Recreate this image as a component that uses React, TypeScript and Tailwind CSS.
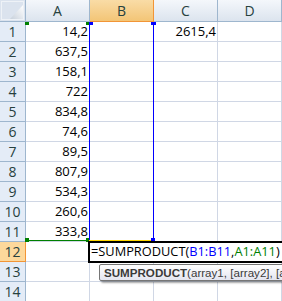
import React from "react";

const colA = ["14,2", "637,5", "158,1", "722", "834,8", "74,6", "89,5", "807,9", "534,3", "260,6", "333,8"];
const cols = ["A", "B", "C", "D"];

export default function App() {
  const rows = Array.from({ length: 14 }, (_, i) => i + 1);
  return (
    <div
      className="relative w-[282px] h-[301px] overflow-hidden bg-white text-black"
      style={{ fontFamily: '"Open Sans", "Noto Sans", sans-serif' }}
    >
      <div className="grid grid-cols-[26px_64px_64px_64px_64px] grid-rows-[22px_repeat(14,20px)]">
        {/* corner */}
        <div className="relative border-r border-b border-[#9eb6ce] bg-[#dbe3ee]">
          <div className="absolute inset-[1px] border border-[#eef2f7]" />
          <svg className="absolute left-[10px] top-[5px]" width="13" height="14" viewBox="0 0 13 14">
            <defs>
              <linearGradient id="tri" x1="0" y1="1" x2="1" y2="0">
                <stop offset="0" stopColor="#c7d0db" />
                <stop offset="1" stopColor="#ffffff" />
              </linearGradient>
            </defs>
            <polygon points="13,0 13,14 0,14" fill="url(#tri)" />
          </svg>
        </div>
        {cols.map((c) => (
          <div
            key={c}
            className={
              c === "B"
                ? "flex items-center justify-center border-r border-b border-[#f29536] bg-gradient-to-b from-[#f9dca6] to-[#f3c576] text-[14px] text-[#27413e]"
                : "flex items-center justify-center border-r border-b border-[#9eb6ce] bg-gradient-to-b from-[#f4f7fb] to-[#dce4ee] text-[14px] text-[#27413e]"
            }
          >
            {c}
          </div>
        ))}
        {rows.map((r) => (
          <React.Fragment key={r}>
            <div
              className={
                r === 12
                  ? "flex items-center justify-center border-r border-b border-[#f29536] bg-[#fdd89b] text-[14px] text-[#27413e]"
                  : "flex items-center justify-center border-r border-b border-[#9eb6ce] bg-[#e4ecf7] text-[14px] text-[#27413e]"
              }
            >
              {r}
            </div>
            <div className="flex items-center justify-end pr-[1px] border-r border-b border-[#d0d7e5] text-[13px]">
              {r <= 11 ? colA[r - 1] : ""}
            </div>
            <div className="border-r border-b border-[#d0d7e5]" />
            <div className="flex items-center justify-end pr-[1px] border-r border-b border-[#d0d7e5] text-[13px]">
              {r === 1 ? "2615,4" : ""}
            </div>
            <div className="border-r border-b border-[#d0d7e5]" />
          </React.Fragment>
        ))}
      </div>

      {/* range finder: B1:B11 (blue) */}
      <div className="absolute left-[89px] top-[22px] w-[1px] h-[219px] bg-[#0000ff]" />
      <div className="absolute left-[153px] top-[22px] w-[1px] h-[219px] bg-[#0000ff]" />
      <div className="absolute left-[89px] top-[240px] w-[65px] h-[1px] bg-[#ffd700]" />
      <div className="absolute left-[88px] top-[22px] w-[5px] h-[3px] bg-[#0000ff]" />
      <div className="absolute left-[151px] top-[22px] w-[5px] h-[3px] bg-[#0000ff]" />
      <div className="absolute left-[151px] top-[238px] w-[4px] h-[3px] bg-[#0000ff]" />

      {/* range finder: A1:A11 (green) */}
      <div className="absolute left-[26px] top-[240px] w-[63px] h-[1px] bg-[#008000]" />
      <div className="absolute left-[25px] top-[22px] w-[4px] h-[3px] bg-[#008000]" />
      <div className="absolute left-[86px] top-[22px] w-[3px] h-[3px] bg-[#008000]" />
      <div className="absolute left-[25px] top-[238px] w-[4px] h-[4px] bg-[#008000]" />
      <div className="absolute left-[86px] top-[238px] w-[3px] h-[4px] bg-[#008000]" />

      {/* edit box */}
      <div className="absolute left-[88px] top-[241px] w-[196px] h-[22px] border-2 border-black bg-white flex items-center pl-[1px] text-[12.8px] whitespace-nowrap">
        <span>=SUMPRODUCT(</span>
        <span className="text-[#0000ff]">B1:B11</span>
        <span>,</span>
        <span className="text-[#008000]">A1:A11</span>
        <span>)</span>
      </div>

      {/* tooltip */}
      <div
        className="absolute left-[99px] top-[264px] w-[200px] h-[17px] rounded-[2px] border border-[#767676] bg-gradient-to-b from-[#ffffff] to-[#e4e5f0] shadow-[2px_2px_2px_rgba(0,0,0,0.35)] flex items-center pl-[4px] text-[11.6px] text-[#3a3a3a] whitespace-nowrap"
        style={{ fontFamily: '"Liberation Sans", Arial, sans-serif' }}
      >
        <span className="font-bold">SUMPRODUCT</span>
        <span>(array1, [array2], [array3], ...)</span>
      </div>
    </div>
  );
}
